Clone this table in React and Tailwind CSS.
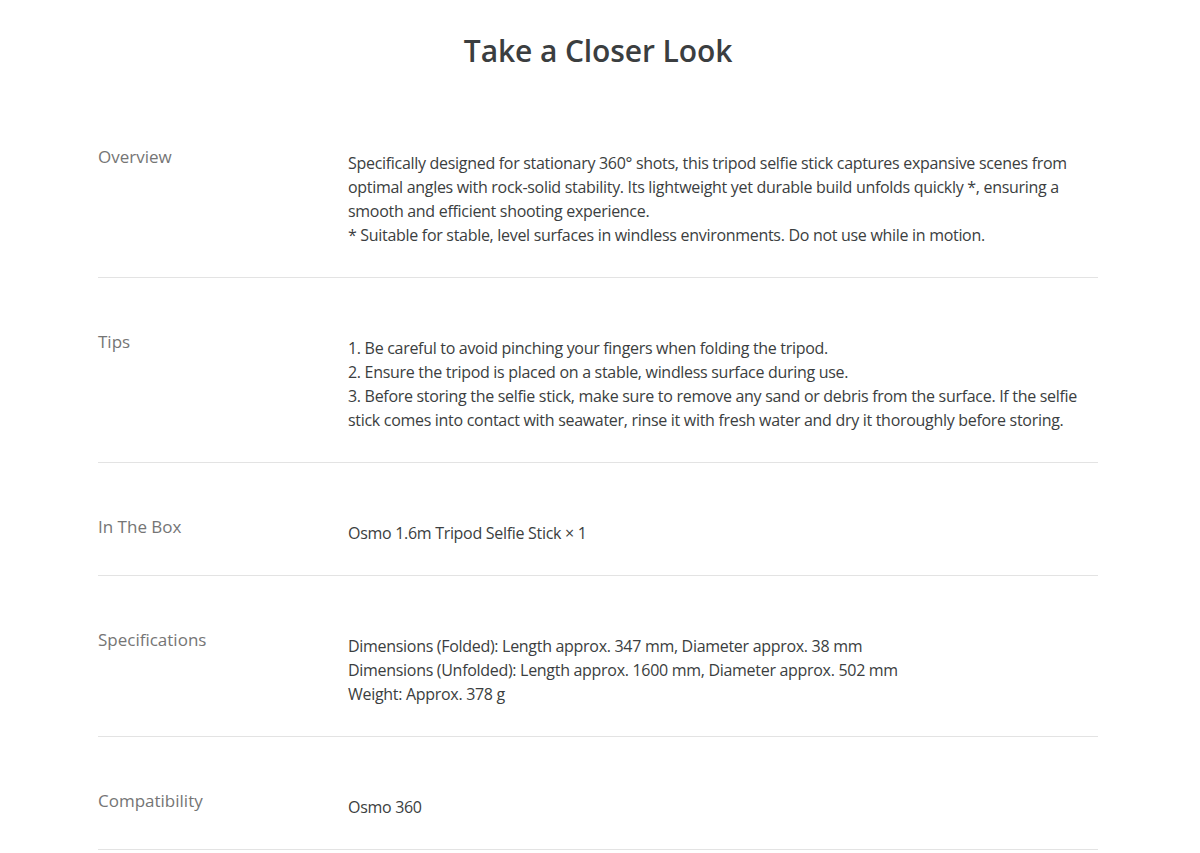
import React from "react";

const rows = [
  {
    label: "Overview",
    lines: [
      "Specifically designed for stationary 360° shots, this tripod selfie stick captures expansive scenes from optimal angles with rock-solid stability. Its lightweight yet durable build unfolds quickly *, ensuring a smooth and efficient shooting experience.",
      "* Suitable for stable, level surfaces in windless environments. Do not use while in motion.",
    ],
  },
  {
    label: "Tips",
    lines: [
      "1. Be careful to avoid pinching your fingers when folding the tripod.",
      "2. Ensure the tripod is placed on a stable, windless surface during use.",
      "3. Before storing the selfie stick, make sure to remove any sand or debris from the surface. If the selfie stick comes into contact with seawater, rinse it with fresh water and dry it thoroughly before storing.",
    ],
  },
  { label: "In The Box", lines: ["Osmo 1.6m Tripod Selfie Stick × 1"] },
  {
    label: "Specifications",
    lines: [
      "Dimensions (Folded): Length approx. 347 mm, Diameter approx. 38 mm",
      "Dimensions (Unfolded): Length approx. 1600 mm, Diameter approx. 502 mm",
      "Weight: Approx. 378 g",
    ],
  },
  { label: "Compatibility", lines: ["Osmo 360"] },
];

export default function App() {
  return (
    <div className="min-h-screen bg-white pr-1 font-['Open_Sans',sans-serif]">
      <div className="mx-auto w-[1000px] pt-[31px]">
        <h2 className="text-center text-[30px] leading-[40px] font-semibold text-[#3b3e40] tracking-[-0.1px]">
          Take a Closer Look
        </h2>

        <div className="mt-[22px]">
          {rows.map((row) => (
            <div
              key={row.label}
              className="flex border-b border-[#e3e3e3] pt-[52px] pb-[30px]"
            >
              <div className="w-[250px] shrink-0 text-[17px] leading-[24px] text-[#757575]">
                {row.label}
              </div>
              <div className="mt-[6px] w-[732px] text-[16px] leading-[24px] text-[#3b3e40] tracking-[-0.3px]">
                {row.lines.map((line, i) => (
                  <p key={i}>{line}</p>
                ))}
              </div>
            </div>
          ))}
        </div>
      </div>
    </div>
  );
}
